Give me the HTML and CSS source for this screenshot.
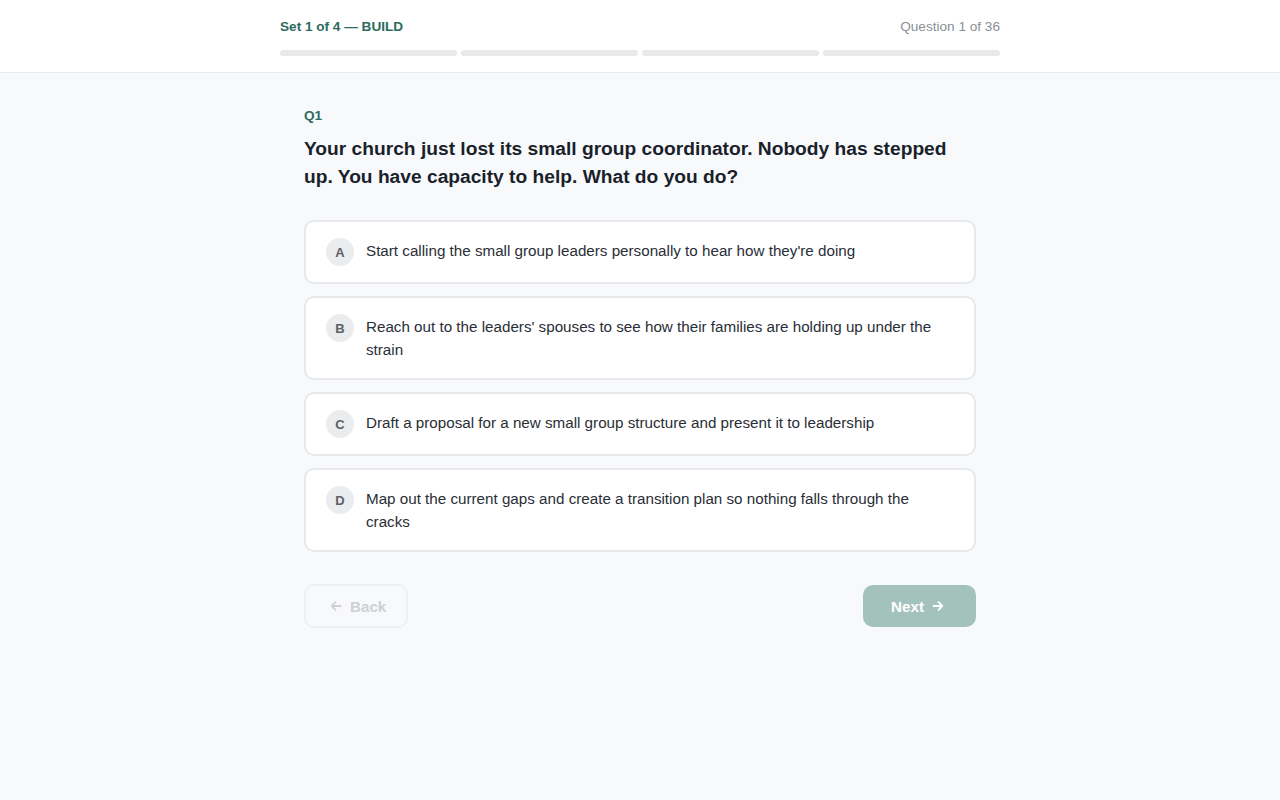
FILE: index.html
```html
<!DOCTYPE html>
<html lang="en">
<head>
<meta charset="utf-8">
<title>Quiz</title>
<link rel="stylesheet" href="styles.css">
</head>
<body>
<header class="topbar">
  <div class="topbar-inner">
    <div class="topbar-row">
      <span class="set-label">Set 1 of 4 — BUILD</span>
      <span class="q-count">Question 1 of 36</span>
    </div>
    <div class="progress">
      <span class="seg"></span>
      <span class="seg"></span>
      <span class="seg"></span>
      <span class="seg"></span>
    </div>
  </div>
</header>
<main class="main">
  <div class="quiz">
    <div class="q-num">Q1</div>
    <h1 class="q-text">Your church just lost its small group coordinator. Nobody has stepped up. You have capacity to help. What do you do?</h1>
    <div class="options">
      <button class="option"><span class="letter">A</span><span class="opt-text">Start calling the small group leaders personally to hear how they're doing</span></button>
      <button class="option"><span class="letter">B</span><span class="opt-text">Reach out to the leaders' spouses to see how their families are holding up under the strain</span></button>
      <button class="option"><span class="letter">C</span><span class="opt-text">Draft a proposal for a new small group structure and present it to leadership</span></button>
      <button class="option"><span class="letter">D</span><span class="opt-text">Map out the current gaps and create a transition plan so nothing falls through the cracks</span></button>
    </div>
    <div class="nav">
      <button class="btn btn-back" disabled>
        <svg width="12" height="12" viewBox="0 0 12 12" fill="none" stroke="currentColor" stroke-width="1.8" stroke-linecap="round" stroke-linejoin="round"><path d="M10.5 6H1.8M5.5 2.2L1.7 6l3.8 3.8"/></svg>
        <span>Back</span>
      </button>
      <button class="btn btn-next" disabled>
        <span>Next</span>
        <svg width="12" height="12" viewBox="0 0 12 12" fill="none" stroke="currentColor" stroke-width="1.8" stroke-linecap="round" stroke-linejoin="round"><path d="M1.5 6h8.7M6.5 2.2L10.3 6 6.5 9.8"/></svg>
      </button>
    </div>
  </div>
</main>
</body>
</html>
```
FILE: styles.css
```css
* { box-sizing: border-box; }
html, body { margin: 0; padding: 0; }
body {
  font-family: "Liberation Sans", Arial, sans-serif;
  background: #f8f9fb;
  color: #1a202c;
  min-height: 800px;
}
.topbar {
  background: #ffffff;
  border-bottom: 1px solid #e6e9ed;
}
.topbar-inner {
  width: 720px;
  margin: 0 auto;
  padding: 18px 0 16px;
}
.topbar-row {
  display: flex;
  justify-content: space-between;
  align-items: center;
  height: 16px;
  font-size: 13.6px;
}
.set-label { font-weight: 700; color: #2d6a5f; }
.q-count { color: #8a8f96; }
.progress {
  display: flex;
  gap: 4px;
  margin-top: 16px;
}
.seg {
  flex: 1;
  height: 6px;
  border-radius: 3px;
  background: #e8e9eb;
}
.main { padding-top: 34px; }
.quiz {
  width: 672px;
  margin: 0 auto;
}
.q-num {
  font-size: 13.6px;
  font-weight: 700;
  color: #2d6a5f;
  line-height: 18px;
}
.q-text {
  margin: 10px 0 29px;
  font-size: 19.2px;
  line-height: 28px;
  font-weight: 700;
  color: #1a1f2c;
}
.options {
  display: flex;
  flex-direction: column;
  gap: 12px;
}
.option {
  display: flex;
  align-items: flex-start;
  gap: 12px;
  width: 100%;
  text-align: left;
  background: #ffffff;
  border: 2px solid #e6e8eb;
  border-radius: 10px;
  padding: 16px 20px;
  font-family: inherit;
  cursor: pointer;
}
.letter {
  flex: none;
  width: 28px;
  height: 28px;
  border-radius: 50%;
  background: #eaeced;
  color: #5d6166;
  font-size: 13px;
  font-weight: 700;
  display: flex;
  align-items: center;
  justify-content: center;
}
.opt-text {
  font-size: 15.2px;
  line-height: 23px;
  color: #2a2e36;
  padding: 0.5px 0 1.5px;
}
.nav {
  display: flex;
  justify-content: space-between;
  align-items: center;
  margin-top: 32px;
}
.btn {
  display: flex;
  align-items: center;
  gap: 8px;
  height: 44px;
  border-radius: 10px;
  font-family: inherit;
  font-size: 15.2px;
  font-weight: 700;
}
.btn-back {
  padding: 0 20px 0 24px;
  background: #f8f9fb;
  border: 2px solid #eef0f2;
  color: #cdd0d4;
}
.btn-next {
  padding: 0 32px 0 28px;
  background: #a4c2bc;
  border: none;
  height: 42px;
  color: #ffffff;
}
```
